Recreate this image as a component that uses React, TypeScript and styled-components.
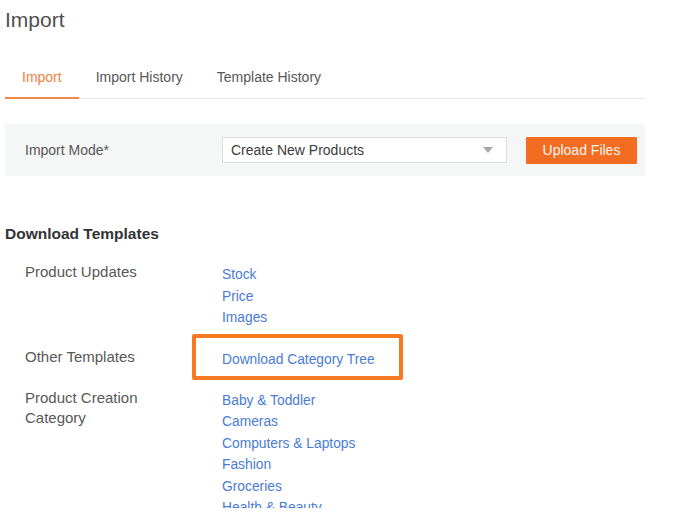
import React from "react";
import styled, { createGlobalStyle } from "styled-components";

const Global = createGlobalStyle`
  html, body { margin: 0; padding: 0; background: #ffffff; }
  body { font-family: "Liberation Sans", Arial, sans-serif; }
  * { box-sizing: border-box; }
`;

const Page = styled.div`
  height: 508px;
  overflow: hidden;
  padding: 6px 0 0 5px;
  width: 677px;
`;

const Title = styled.h1`
  margin: 0;
  font-size: 21px;
  line-height: 28px;
  font-weight: 400;
  color: #4f4f4f;
`;

const TabBar = styled.div`
  margin-top: 33px;
  width: 640px;
  display: flex;
  border-bottom: 1px solid #e6e6e6;
`;

const Tab = styled.div<{ $active?: boolean }>`
  padding: 0 17px 10px;
  margin-bottom: -1px;
  font-size: 14px;
  line-height: 20px;
  color: ${(p) => (p.$active ? "#f0823f" : "#585858")};
  border-bottom: 2px solid ${(p) => (p.$active ? "#f08a4b" : "transparent")};
`;

const Panel = styled.div`
  margin-top: 25px;
  width: 640px;
  height: 52px;
  background: #f5f6f6;
  display: flex;
  align-items: center;
  padding: 0 8px 0 20px;
`;

const ModeLabel = styled.div`
  width: 197px;
  font-size: 14px;
  color: #585858;
`;

const Select = styled.div`
  width: 285px;
  height: 26px;
  background: #ffffff;
  border: 1px solid #dddddd;
  display: flex;
  align-items: center;
  justify-content: space-between;
  padding: 0 13px 0 8px;
  font-size: 14px;
  color: #3c3c3c;
`;

const UploadButton = styled.button`
  margin-left: 19px;
  width: 111px;
  height: 27px;
  border: none;
  border-radius: 1px;
  background: #f26c22;
  color: #fff4ec;
  font-family: "Liberation Sans", Arial, sans-serif;
  font-size: 14px;
  padding: 0;
`;

const Heading = styled.h2`
  margin: 48px 0 0;
  font-size: 15.5px;
  line-height: 20px;
  font-weight: 700;
  color: #333333;
`;

const Rows = styled.div`
  margin-top: 18px;
  display: flex;
  flex-direction: column;
  gap: 18px;
`;

const Row = styled.div`
  display: grid;
  grid-template-columns: 197px 1fr;
  padding-left: 20px;
`;

const RowLabel = styled.div`
  font-size: 15px;
  line-height: 20px;
  color: #585858;
`;

const LinkList = styled.div<{ $lh?: number }>`
  padding-top: 2px;
  display: flex;
  flex-direction: column;
  align-items: flex-start;
  position: relative;
  font-size: 13.8px;
  line-height: ${(p) => p.$lh ?? 21.5}px;
`;

const Link = styled.a`
  color: #4a7bd6;
  text-decoration: none;
  white-space: nowrap;
`;

const Highlight = styled.span`
  position: absolute;
  left: -30px;
  top: -13px;
  width: 211px;
  height: 46px;
  border: 4px solid #f57a22;
  border-radius: 2px;
  pointer-events: none;
`;

const Arrow = () => (
  <svg width="10" height="6" viewBox="0 0 10 6">
    <path d="M0 0 L10 0 L5 6 Z" fill="#a8a8a8" />
  </svg>
);

const categories = [
  "Baby & Toddler",
  "Cameras",
  "Computers & Laptops",
  "Fashion",
  "Groceries",
  "Health & Beauty",
];

export default function App() {
  return (
    <>
      <Global />
      <Page>
        <Title>Import</Title>
        <TabBar>
          <Tab $active>Import</Tab>
          <Tab>Import History</Tab>
          <Tab>Template History</Tab>
        </TabBar>
        <Panel>
          <ModeLabel>Import Mode*</ModeLabel>
          <Select>
            <span>Create New Products</span>
            <Arrow />
          </Select>
          <UploadButton>Upload Files</UploadButton>
        </Panel>
        <Heading>Download Templates</Heading>
        <Rows>
          <Row>
            <RowLabel>Product Updates</RowLabel>
            <LinkList>
              <Link href="#">Stock</Link>
              <Link href="#">Price</Link>
              <Link href="#">Images</Link>
            </LinkList>
          </Row>
          <Row>
            <RowLabel>Other Templates</RowLabel>
            <LinkList>
              <Link href="#">Download Category Tree</Link>
              <Highlight />
            </LinkList>
          </Row>
          <Row>
            <RowLabel>
              Product Creation
              <br />
              Category
            </RowLabel>
            <LinkList $lh={21.4}>
              {categories.map((c) => (
                <Link href="#" key={c}>
                  {c}
                </Link>
              ))}
            </LinkList>
          </Row>
        </Rows>
      </Page>
    </>
  );
}
